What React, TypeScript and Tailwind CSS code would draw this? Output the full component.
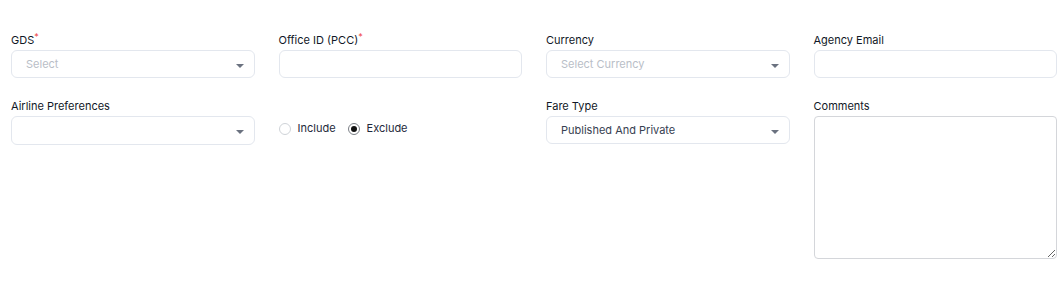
import React from "react";

const font = { fontFamily: "Inter, 'Noto Sans', sans-serif" };

function Label({ text, required }: { text: string; required?: boolean }) {
  return (
    <label className="block h-4 mb-[2px] text-[11px] leading-4 font-normal text-[#111827]">
      {text}
      {required && <sup className="text-[9px] text-[#ef4444] relative -top-[4px]">*</sup>}
    </label>
  );
}

function Caret() {
  return (
    <svg width="8" height="4" viewBox="0 0 8 4" className="shrink-0 mt-[3px]">
      <path d="M0 0 L8 0 L4 4 Z" fill="#6b7280" />
    </svg>
  );
}

function FakeSelect({ value, placeholder }: { value?: string; placeholder?: string }) {
  return (
    <div className="h-[28px] flex items-center justify-between pl-[14px] pr-[10px] border border-[#e3e7ee] rounded-[6px] bg-white">
      <span className={value ? "text-[11px] text-[#374151]" : "text-[11px] text-[#b9bec7]"}>
        {value ?? placeholder ?? ""}
      </span>
      <Caret />
    </div>
  );
}

function TextInput() {
  return <div className="h-[28px] border border-[#e3e7ee] rounded-[6px] bg-white" />;
}

function Radio({ label, checked }: { label: string; checked?: boolean }) {
  return (
    <div className="flex items-center gap-[7px]">
      <span
        className={
          checked
            ? "w-[12px] h-[12px] rounded-full border border-[#7b7f86] flex items-center justify-center"
            : "w-[12px] h-[12px] rounded-full border border-[#cfd3d8]"
        }
      >
        {checked && <span className="w-[6px] h-[6px] rounded-full bg-[#111111]" />}
      </span>
      <span className="text-[11px] text-[#1e293b]">{label}</span>
    </div>
  );
}

export default function App() {
  return (
    <div className="w-[1064px] h-[283px] bg-white overflow-hidden" style={font}>
      <div className="grid grid-cols-4 gap-x-6 gap-y-[20px] pl-[11px] pr-[7px] pt-[32px] items-start">
        <div>
          <Label text="GDS" required />
          <FakeSelect placeholder="Select" />
        </div>
        <div>
          <Label text="Office ID (PCC)" required />
          <TextInput />
        </div>
        <div>
          <Label text="Currency" />
          <FakeSelect placeholder="Select Currency" />
        </div>
        <div>
          <Label text="Agency Email" />
          <TextInput />
        </div>

        <div>
          <Label text="Airline Preferences" />
          <div className="h-[29px] flex items-center justify-between pl-[14px] pr-[10px] border border-[#e3e7ee] rounded-[6px] bg-white">
            <span />
            <Caret />
          </div>
        </div>
        <div>
          <div className="h-4 mb-[2px]" />
          <div className="h-[28px] flex items-center gap-[12px] pb-[3px]">
            <Radio label="Include" />
            <Radio label="Exclude" checked />
          </div>
        </div>
        <div>
          <Label text="Fare Type" />
          <FakeSelect value="Published And Private" />
        </div>
        <div>
          <Label text="Comments" />
          <textarea className="block w-full h-[143px] border border-[#d4d6da] rounded-[4px] bg-white resize-y outline-none" />
        </div>
      </div>
    </div>
  );
}
